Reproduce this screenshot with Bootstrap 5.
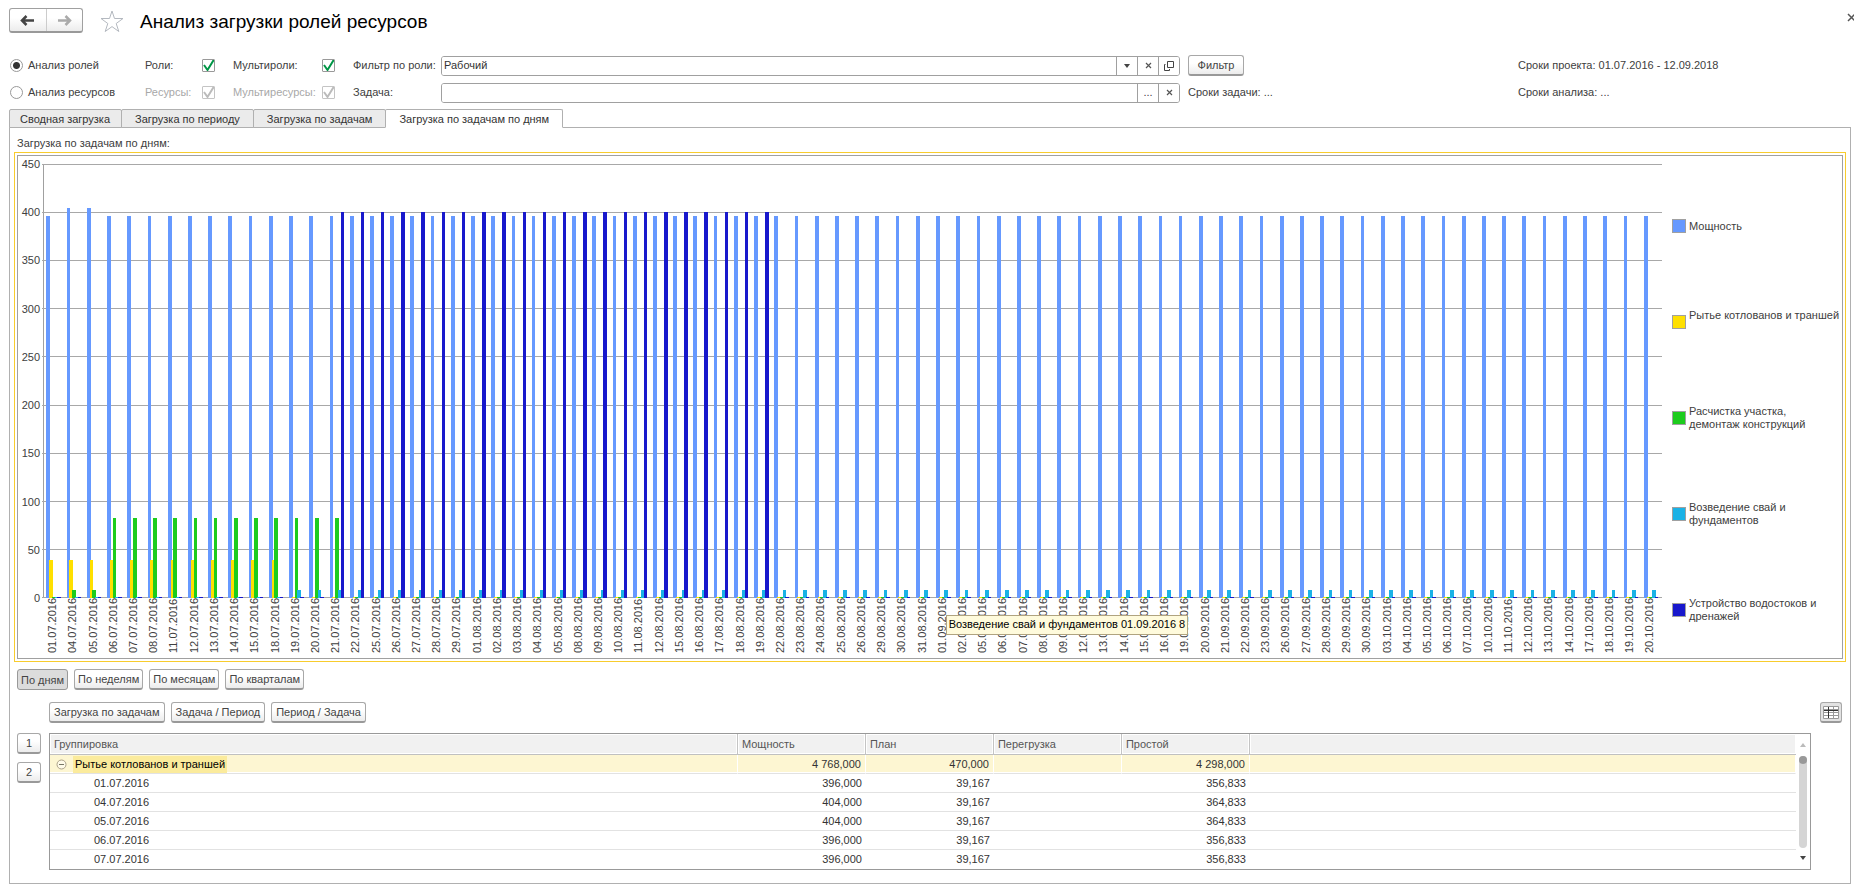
<!DOCTYPE html>
<html lang="ru">
<head>
<meta charset="utf-8">
<meta name="viewport" content="width=device-width, initial-scale=1">
<title>Анализ загрузки ролей ресурсов</title>
<link rel="stylesheet" href="https://cdn.jsdelivr.net/npm/bootstrap@5.3.0/dist/css/bootstrap.min.css">
<style>
  :root { --line: #a0a0a0; --ink: #404040; }
  body { font: 11px/13px "Liberation Sans", Arial, sans-serif; color: var(--ink); background: #fff; }
  button, input { font: inherit; }
  svg { display: block; }

  /* title bar */
  .title-bar { height: 42px; padding: 8px 0 0 9px; }
  .nav-pair { width: 74px; height: 25px; border: 1px solid var(--line); border-bottom: 2px solid #999; border-radius: 3px; background: linear-gradient(#fff 40%, #ececec); }
  .nav-pair button { border: 0; padding: 0; background: none; }
  .nav-pair button + button { border-left: 1px solid #ccc; }
  .star-btn, .close-btn { border: 0; padding: 0; background: none; }
  .star-btn { margin: 1px 0 0 17px; }
  .page-title { font-size: 19px; line-height: 28px; font-weight: 400; color: #000; margin: 0 0 0 16px; }
  .close-btn { margin-top: 4px; width: 7px; overflow: hidden; }

  /* filters */
  .filters { display: grid; grid-template-columns: 135px 57px 31px 89px 31px 88px minmax(160px, 1fr) 338px 336px; grid-auto-rows: 27px; align-items: center; padding: 10px 0 0 10px; }
  .filters label { white-space: nowrap; }
  .filters .dim { color: #a8a8a8; }
  .filters .side { padding-left: 8px; }
  .radio-pair { gap: 5px; }
  .form-check-input { width: 13px; height: 13px; margin: 0; border: 1px solid #999; flex: none; display: block; }
  .form-check-input[type=checkbox] { border-radius: 1px; }
  .form-check-input:checked { background-color: #fff; border-color: #999; }
  .form-check-input:checked[type=radio] { background-image: radial-gradient(circle, #333 0 3px, transparent 4px); }
  .form-check-input:checked[type=checkbox] { background-size: 13px 13px; background-image: url("data:image/svg+xml,%3Csvg xmlns='http://www.w3.org/2000/svg' viewBox='0 0 13 13'%3E%3Cpath d='M2 6l3.500 5L12 .5' fill='none' stroke='%23009646' stroke-width='2'/%3E%3C/svg%3E"); }
  .form-check-input:disabled[type=checkbox] { opacity: 1; border-color: #c4c4c4; background-image: url("data:image/svg+xml,%3Csvg xmlns='http://www.w3.org/2000/svg' viewBox='0 0 13 13'%3E%3Cpath d='M2 6l3.500 5L12 .5' fill='none' stroke='%23bbb' stroke-width='2'/%3E%3C/svg%3E"); }
  .combo { height: 20px; border: 1px solid var(--line); border-radius: 3px; background: #fff; overflow: hidden; }
  .combo input { border: 0; outline: 0; padding: 0 2px; min-width: 0; color: #333; }
  .combo button { flex: none; width: 21px; padding: 0; border: 0; border-left: 1px solid var(--line); background: #fff; color: #444; }

  .cmd { height: 21px; padding: 0 3px; border: 1px solid #a8a8a8; border-bottom: 2px solid #999; border-radius: 3px; background: linear-gradient(#fff 40%, #ececec); color: #444; line-height: 16px; white-space: nowrap; font-size: 11px; }
  .cmd.active { background: #dcdcdc; border: 1px solid #999; line-height: 18px; color: #444; }
  .cmd-filter { width: 56px; }

  /* tabs */
  .nav-tabs { margin: 3px 0 0 9px; border: 0; position: relative; z-index: 1; }
  .nav-tabs .nav-link { height: 19px; padding: 0 13px; line-height: 18px; border: 1px solid #b0b0b0; border-radius: 2px 2px 0 0; margin: 0 -1px 0 0; background: #ebebeb; color: #333; }
  .nav-tabs .nav-item:first-child .nav-link { padding: 0 11px 0 10px; }
  .nav-tabs .nav-link.active { background: #fff; border-color: #b0b0b0 #b0b0b0 #fff; color: #333; }
  .panel { border: 1px solid #b0b0b0; margin: -1px 3px 5px 9px; padding: 9px 4px 13px 4px; }
  .chart-label { padding-left: 3px; margin-bottom: 2px; }

  /* chart */
  .chart-focus { border: 1px solid #f8cc2d; padding: 2px; }
  .chart-box { border: 1px solid var(--line); padding: 8px 0 5px; }
  .y-axis { width: 22px; height: 434px; flex: none; text-align: right; }
  .y-axis span { height: 0; line-height: 0; }
  .plot-col { margin-left: 3px; min-width: 0; }
  .plot { height: 434px; border-left: 1px solid var(--line); position: relative; }
  .grid-lines { position: absolute; inset: 0 0 0 -2px; }
  .grid-lines i { height: 1px; background: #a8a8a8; }
  .plot-bars { position: relative; height: 100%; }
  .slot { flex: 1 1 0; min-width: 0; display: grid; grid-template-columns: 10fr 11fr 11fr 11fr 11fr 14fr 13fr; align-items: end; height: 100%; }
  .slot b { grid-row: 1; min-height: 1px; margin-right: -1px; }
  .slot b:nth-child(1) { grid-column: 2; background: #6699ff; }
  .slot b:nth-child(2) { grid-column: 3; background: #ffe000; }
  .slot b:nth-child(3) { grid-column: 4; background: #1dcc1d; }
  .slot b:nth-child(4) { grid-column: 5; background: #1ab2e6; }
  .slot b:nth-child(5) { grid-column: 6; margin: 0; background: #1818cc; }
  .x-labels { margin-left: -1px; padding-right: 2px; height: 55px; }
  .x-cell { flex: 1 1 0; min-width: 0; position: relative; display: flex; justify-content: center; }
  .x-cell > span { writing-mode: vertical-rl; transform: rotate(180deg); white-space: nowrap; line-height: 14px; }
  .chart-tip { position: absolute; left: 14px; top: 17px; z-index: 2; border: 1px solid #b0a480; background: #fffbdc; color: #000; padding: 2px 2px 3px; white-space: nowrap; }
  .legend { width: 180px; flex: none; padding: 14px 0 0 10px; margin-bottom: -5px; }
  .legend li { gap: 3px; height: 26px; }
  .legend li span + span { max-width: 140px; }
  .legend .two-row { height: 26px; align-self: flex-start; }
  .swatch { width: 14px; height: 14px; border: 1px solid var(--line); flex: none; }

  /* report */
  .periods { gap: 6px; margin: 7px 0 0 3px; }
  .report-bar { gap: 6px; margin: 12px 0 10px 35px; }
  .report-bar .cmd { padding: 0 4px; }
  .report-bar .view-btn { width: 22px; padding: 0; background: #e2e2e2; }
  .levels { width: 32px; flex: none; padding-left: 3px; gap: 8px; }
  .levels .cmd { width: 24px; padding: 0; }
  .report { border: 1px solid #999; margin: 0 35px 0 3px; min-width: 0; }
  .report table { table-layout: fixed; width: 100%; border-collapse: separate; border-spacing: 0; }
  .report th { height: 21px; padding: 0 4px; font-weight: 400; color: #555; background: #f1f1f1; border-bottom: 1px solid #c0c0c0; border-right: 1px solid #c4c4c4; box-shadow: inset 0 0 0 1px #fff; }
  .report td { height: 19px; padding: 0 4px; text-align: right; border-bottom: 1px solid #e2e2e2; color: #333; }
  .report tr:last-child td { border-bottom: 0; }
  .report td:first-child { text-align: left; padding-left: 44px; }
  .report th:last-child { border-right: 0; }
  .report .group td { background: #fdf6d2; border-right: 1px solid #fff; box-shadow: inset 0 -1px #fff; }
  .report .group td:first-child { padding-left: 6px; }
  .group-name { background: #fbeb9c; color: #000; padding: 2px; margin-left: 6px; line-height: 13px; }
  .scroll-rail { width: 14px; flex: none; padding: 9px 0 9px; }
  .scroll-thumb { width: 8px; margin: 9px 0 8px; border-radius: 4px; background: #d5d5d5; }
  .scroll-thumb i { display: block; width: 8px; height: 8px; border-radius: 50%; background: #999; }
</style>
</head>
<body>
<header class="title-bar d-flex align-items-start">
  <div class="nav-pair d-flex">
    <button type="button" class="flex-fill d-flex justify-content-center align-items-center" aria-label="Назад">
      <svg width="15" height="11" viewBox="0 0 15 11"><path d="M6.500 1L2 5.500 6.500 10M2 5.500h12" fill="none" stroke="#444" stroke-width="2.500"/></svg>
    </button>
    <button type="button" class="flex-fill d-flex justify-content-center align-items-center" aria-label="Вперёд">
      <svg width="15" height="11" viewBox="0 0 15 11"><path d="M8.500 1L13 5.500 8.500 10M13 5.500H1" fill="none" stroke="#aaa" stroke-width="2.500"/></svg>
    </button>
  </div>
  <button type="button" class="star-btn" aria-label="Избранное">
    <svg width="24" height="24" viewBox="0 0 24 24"><path d="M12 2l2.500 7.500h8.500l-6.800 5 2.600 8L12 17.600 5.200 22.500l2.600-8-6.800-5h8.500z" fill="#fff" stroke="#b4b9c0"/></svg>
  </button>
  <h1 class="page-title">Анализ загрузки ролей ресурсов</h1>
  <button type="button" class="close-btn ms-auto" aria-label="Закрыть">
    <svg width="8" height="12" viewBox="0 0 8 12"><path d="M1 2l7 7M8 2L1 9" stroke="#555" stroke-width="1.500"/></svg>
  </button>
</header>

<form class="filters" onsubmit="return false">
  <div class="radio-pair d-flex align-items-center"><input class="form-check-input" type="radio" name="mode" id="modeRoles" checked><label for="modeRoles">Анализ ролей</label></div>
  <label for="cRoles">Роли:</label>
  <input class="form-check-input" type="checkbox" id="cRoles" checked>
  <label for="cMultiRoles">Мультироли:</label>
  <input class="form-check-input" type="checkbox" id="cMultiRoles" checked>
  <label for="roleFilter">Фильтр по роли:</label>
  <div class="combo d-flex">
    <input class="flex-fill" type="text" id="roleFilter" value="Рабочий">
    <button type="button" class="d-flex justify-content-center align-items-center" aria-label="Выбрать"><svg width="6" height="4" viewBox="0 0 6 4"><path d="M0 0h6L3 4z" fill="#444"/></svg></button>
    <button type="button" class="d-flex justify-content-center align-items-center" aria-label="Очистить"><svg width="7" height="7" viewBox="0 0 7 7"><path d="M1 1l5 5M6 1L1 6" stroke="#555" stroke-width="1.200"/></svg></button>
    <button type="button" class="d-flex justify-content-center align-items-center" aria-label="Открыть"><svg width="10" height="10" viewBox="0 0 10 10"><path d="M3.500 .5h6v6h-6zM1.500 3.500h-1v6h5v-1.500" fill="none" stroke="#444"/></svg></button>
  </div>
  <div class="side"><button type="button" class="cmd cmd-filter">Фильтр</button></div>
  <div>Сроки проекта: 01.07.2016 - 12.09.2018</div>

  <div class="radio-pair d-flex align-items-center"><input class="form-check-input" type="radio" name="mode" id="modeRes"><label for="modeRes">Анализ ресурсов</label></div>
  <label class="dim" for="cRes">Ресурсы:</label>
  <input class="form-check-input" type="checkbox" id="cRes" checked disabled>
  <label class="dim" for="cMultiRes">Мультиресурсы:</label>
  <input class="form-check-input" type="checkbox" id="cMultiRes" checked disabled>
  <label for="task">Задача:</label>
  <div class="combo d-flex">
    <input class="flex-fill" type="text" id="task">
    <button type="button">...</button>
    <button type="button" class="d-flex justify-content-center align-items-center" aria-label="Очистить"><svg width="7" height="7" viewBox="0 0 7 7"><path d="M1 1l5 5M6 1L1 6" stroke="#555" stroke-width="1.200"/></svg></button>
  </div>
  <div class="side">Сроки задачи: ...</div>
  <div>Сроки анализа: ...</div>
</form>

<ul class="nav nav-tabs">
  <li class="nav-item"><a class="nav-link" href="#">Сводная загрузка</a></li>
  <li class="nav-item"><a class="nav-link" href="#">Загрузка по периоду</a></li>
  <li class="nav-item"><a class="nav-link" href="#">Загрузка по задачам</a></li>
  <li class="nav-item"><a class="nav-link active" href="#" aria-current="page">Загрузка по задачам по дням</a></li>
</ul>

<main class="panel">
  <div class="chart-label">Загрузка по задачам по дням:</div>
  <div class="chart-focus">
    <div class="chart-box d-flex">
      <div class="y-axis d-flex flex-column justify-content-between" id="yAxis"></div>
      <div class="plot-col flex-fill">
        <div class="plot">
          <div class="grid-lines d-flex flex-column justify-content-between" id="gridLines"></div>
          <div class="plot-bars d-flex" id="bars"></div>
        </div>
        <div class="x-labels d-flex" id="xLabels"></div>
      </div>
      <ul class="legend list-unstyled d-flex flex-column justify-content-around">
        <li class="d-flex align-items-center"><span class="swatch" style="background:#6699ff"></span><span>Мощность</span></li>
        <li class="d-flex align-items-center"><span class="swatch" style="background:#ffe000"></span><span class="two-row text-nowrap">Рытье котлованов и траншей</span></li>
        <li class="d-flex align-items-center"><span class="swatch" style="background:#1dcc1d"></span><span>Расчистка участка, демонтаж конструкций</span></li>
        <li class="d-flex align-items-center"><span class="swatch" style="background:#1ab2e6"></span><span>Возведение свай и фундаментов</span></li>
        <li class="d-flex align-items-center"><span class="swatch" style="background:#1818cc"></span><span>Устройство водостоков и дренажей</span></li>
      </ul>
    </div>
  </div>

  <div class="periods d-flex">
    <button type="button" class="cmd active">По дням</button>
    <button type="button" class="cmd">По неделям</button>
    <button type="button" class="cmd">По месяцам</button>
    <button type="button" class="cmd">По кварталам</button>
  </div>

  <div class="report-bar d-flex">
    <button type="button" class="cmd">Загрузка по задачам</button>
    <button type="button" class="cmd">Задача / Период</button>
    <button type="button" class="cmd">Период / Задача</button>
    <button type="button" class="cmd view-btn ms-auto me-1 d-flex justify-content-center align-items-center" aria-label="Вид таблицы">
      <svg width="16" height="13" viewBox="0 0 16 13"><path fill="#fff" stroke="#999" d="M.5 .5h15v12H.5zM1 3.500h14M1 6.500h14M1 9.500h14M10.500 1v11"/><path d="M1 4.500h14M5.500 1v11" stroke="#333" fill="none"/></svg>
    </button>
  </div>

  <div class="d-flex align-items-start">
    <div class="levels d-flex flex-column">
      <button type="button" class="cmd">1</button>
      <button type="button" class="cmd">2</button>
    </div>
    <div class="report d-flex flex-fill">
      <table>
        <colgroup><col style="width:39.400%"><col style="width:128px"><col style="width:128px"><col style="width:128px"><col style="width:128px"><col></colgroup>
        <thead><tr><th>Группировка</th><th>Мощность</th><th>План</th><th>Перегрузка</th><th>Простой</th><th></th></tr></thead>
        <tbody>
          <tr class="group"><td><div class="d-flex align-items-center"><svg width="11" height="11" viewBox="0 0 11 11" aria-hidden="true"><circle cx="5.500" cy="5.500" r="4.500" fill="#fffbe8" stroke="#aaa088"/><path d="M3 5.500h5" stroke="#776"/></svg><span class="group-name">Рытье котлованов и траншей</span></div></td><td>4 768,000</td><td>470,000</td><td></td><td>4 298,000</td><td></td></tr>
          <tr><td>01.07.2016</td><td>396,000</td><td>39,167</td><td></td><td>356,833</td><td></td></tr>
          <tr><td>04.07.2016</td><td>404,000</td><td>39,167</td><td></td><td>364,833</td><td></td></tr>
          <tr><td>05.07.2016</td><td>404,000</td><td>39,167</td><td></td><td>364,833</td><td></td></tr>
          <tr><td>06.07.2016</td><td>396,000</td><td>39,167</td><td></td><td>356,833</td><td></td></tr>
          <tr><td>07.07.2016</td><td>396,000</td><td>39,167</td><td></td><td>356,833</td><td></td></tr>
        </tbody>
      </table>
      <div class="scroll-rail d-flex flex-column align-items-center">
        <svg width="6" height="4" viewBox="0 0 6 4"><path d="M0 4h6L3 0z" fill="#bbb"/></svg>
        <div class="scroll-thumb flex-fill"><i></i></div>
        <svg width="6" height="4" viewBox="0 0 6 4"><path d="M0 0h6L3 4z" fill="#444"/></svg>
      </div>
    </div>
  </div>
</main>

<script src="https://cdn.jsdelivr.net/npm/bootstrap@5.3.0/dist/js/bootstrap.bundle.min.js"></script>
<script>
  // Working days of the analysed period
  const MAX = 450;
  const days = [];
  for (let d = new Date(2016, 6, 1); d <= new Date(2016, 9, 20); d.setDate(d.getDate() + 1)) {
    if (d.getDay() % 6) days.push(String(d.getDate()).padStart(2, '0') + '.' + String(d.getMonth() + 1).padStart(2, '0') + '.2016');
  }
  // Hours by series: capacity, trenches, clearing, foundations, drainage
  const hours = i => [
    i === 1 || i === 2 ? 404 : 396,
    i <= 11 ? 39.167 : 0,
    i === 0 || i > 14 ? 0 : i < 3 ? 8 : 83,
    i >= 12 ? 8 : 0,
    i >= 14 && i <= 35 ? 400 : 0
  ];
  const byId = id => document.getElementById(id);
  for (let v = MAX; v >= 0; v -= 50) {
    byId('yAxis').insertAdjacentHTML('beforeend', `<span>${v}</span>`);
    byId('gridLines').insertAdjacentHTML('beforeend', '<i></i>');
  }
  byId('bars').innerHTML = days.map((d, i) =>
    '<div class="slot">' + hours(i).map(h => `<b style="height:${(h / MAX * 100).toFixed(2)}%"></b>`).join('') + '</div>').join('');
  byId('xLabels').innerHTML = days.map(d =>
    `<div class="x-cell"><span>${d}</span>${d === '01.09.2016' ? '<div class="chart-tip" role="tooltip">Возведение свай и фундаментов 01.09.2016 8</div>' : ''}</div>`).join('');
</script>
</body>
</html>
